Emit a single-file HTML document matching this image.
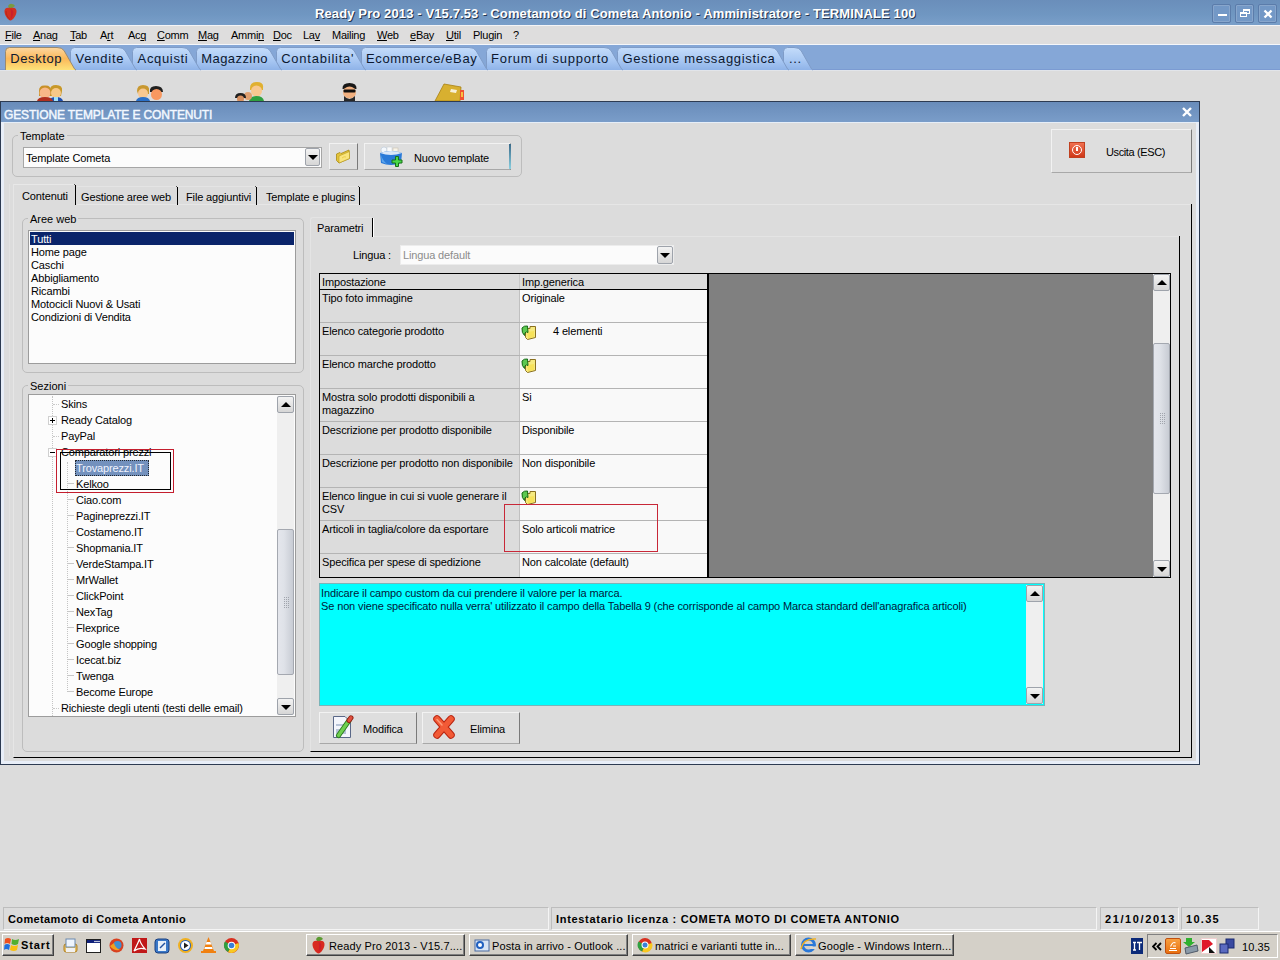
<!DOCTYPE html>
<html><head><meta charset="utf-8">
<style>
*{margin:0;padding:0;box-sizing:border-box}
html,body{width:1280px;height:960px;overflow:hidden;background:#dcdcdc;font-family:"Liberation Sans",sans-serif;font-size:11px;color:#000;position:relative}
.a{position:absolute;white-space:nowrap}
.t11{font-size:11px;letter-spacing:-0.14px;line-height:13px}
#title{left:0;top:0;width:1280px;height:25px;background:linear-gradient(#6a8eba,#7097c2 60%,#7a9fc9)}
#title .t{left:315px;top:5.5px;font-weight:bold;font-size:13px;letter-spacing:0.12px;color:#fff;text-shadow:1px 1px 0 #263650}
.wb{top:4px;width:19px;height:19px;border:1px solid #5b7caa;box-shadow:inset 0 0 0 1px #88a6cc;background:#7398c6;border-radius:2px}
#menu{left:0;top:25px;width:1280px;height:19px;background:#dedddd;border-top:1px solid #f4f4f6}
#menu span{position:absolute;top:3.5px;font-size:11px;letter-spacing:-0.25px;line-height:11px}
#menu u{text-decoration:underline;text-underline-offset:1px}
#tabs{left:0;top:44px;width:1280px;height:26px;background:#85a7d7;border-top:1px solid #f4f6fa}
#tabs:after{content:"";position:absolute;left:0;top:24px;width:1280px;height:1px;background:#7b9bd2}
#tabs:before{content:"";position:absolute;left:0;top:25px;width:1280px;height:1px;background:#e2e5ea}
.tab{position:absolute;top:2px;height:23px}
.tab svg{position:absolute;left:0;top:0}
.tab span{position:absolute;left:6px;top:5px;font-size:13px;letter-spacing:0.55px;color:#0c1830;line-height:13px}
#dlg{left:0;top:101px;width:1200px;height:664px;background:#dcdcdc;border:1px solid #2d3b52}
#dlgt{left:0;top:0;width:1198px;height:21px;background:linear-gradient(#698cba,#7a9dc9);border-bottom:1px solid #e6eef8}
#dlgt .t{left:3px;top:7px;color:#f2f8ff;font-weight:normal;-webkit-text-stroke:0.45px #f2f8ff;font-size:12px;letter-spacing:-0.14px;line-height:12px}
.lb{background:#e8eef8}
.gb{border:1px solid #bdbdbd;border-radius:5px}
.gl{background:#dcdcdc;padding:0 2px;line-height:13px}
.white{background:#fcfcfc;border:1px solid #9c9c9c}
.btn{background:#dedede;border:1px solid;border-color:#f2f2f2 #7a7a7a #a8a8a8 #f2f2f2}
.sb{background:#efefef}
.sbb{width:17px;height:17px;border:1px solid #9ea3ab;border-radius:2px;background:linear-gradient(#f3f3f3,#d6d6d6)}
.up{width:0;height:0;border-left:5px solid transparent;border-right:5px solid transparent;border-bottom:5px solid #000;position:absolute;left:3px;top:5px}
.dn{width:0;height:0;border-left:5px solid transparent;border-right:5px solid transparent;border-top:5px solid #000;position:absolute;left:3px;top:5px}
.row{left:0;width:386px;height:33px;border-bottom:1px solid #b4b4b4}
.c1{left:0;width:198px;height:32px;background:#dcdcdc;padding:2px 0 0 3px;white-space:normal;line-height:13px}
.c2{left:199px;width:187px;height:32px;background:#f9f9f9;border-left:1px solid #b8b8b8;padding:2px 0 0 3px}
.ico{width:16px;height:16px}
#status{left:0;top:907px;width:1280px;height:24px}
.sp{top:0;height:23px;border:1px solid;border-color:#bdbdbd #f4f4f4 #f4f4f4 #bdbdbd;font-weight:bold;padding:5.5px 0 0 4px;line-height:11px}
#task{left:0;top:931px;width:1280px;height:29px;background:#d4d0c8;border-top:1px solid #fff}
.tb{top:2px;height:22px;border:1px solid;border-color:#fff #404040 #404040 #fff;box-shadow:inset -1px -1px 0 #808080;background:#d4d0c8;padding:5px 0 0 23px;font-size:11px;line-height:12px}
.thumb{background:linear-gradient(90deg,#e4e6ec,#dfe2e8 40%,#c8ccd4);border:1px solid #a4a8b0;border-radius:2px}

.tbtn{top:2px;width:159px;height:22px;border:1px solid;border-color:#fff #404040 #404040 #fff;box-shadow:inset -1px -1px 0 #808080;background:#d4d0c8}
.tbtn span{position:absolute;left:22px;top:5px;font-size:11px;line-height:12px;letter-spacing:0.12px}
</style></head><body>
<!-- TITLE BAR -->
<div id="title" class="a">
 
 <div class="t a">Ready Pro 2013 - V15.7.53 - Cometamoto di Cometa Antonio - Amministratore - TERMINALE 100</div>
 <div class="wb a" style="left:1212px"><div class="a" style="left:5px;top:9px;width:9px;height:2px;background:#fff"></div></div>
 <div class="wb a" style="left:1235px"><div class="a" style="left:7px;top:4px;width:7px;height:5px;border:1px solid #fff;border-top-width:2px"></div><div class="a" style="left:4px;top:7px;width:7px;height:5px;border:1px solid #fff;border-top-width:2px;background:#7396c4"></div></div>
 <div class="wb a" style="left:1258px"><svg class="a" style="left:4px;top:4px" width="10" height="10"><path d="M1.5 1.5L8.5 8.5M8.5 1.5L1.5 8.5" stroke="#fff" stroke-width="2.3"/></svg></div>
</div>
<!-- MENU -->
<div id="menu" class="a">
<span style="left:5px"><u>F</u>ile</span><span style="left:33px"><u>A</u>nag</span><span style="left:70px"><u>T</u>ab</span><span style="left:100px">A<u>r</u>t</span><span style="left:128px">Ac<u>q</u></span><span style="left:157px"><u>C</u>omm</span><span style="left:198px"><u>M</u>ag</span><span style="left:231px">Ammi<u>n</u></span><span style="left:273px"><u>D</u>oc</span><span style="left:303px">La<u>v</u></span><span style="left:332px">Mailin<u>g</u></span><span style="left:377px"><u>W</u>eb</span><span style="left:410px"><u>e</u>Bay</span><span style="left:446px"><u>U</u>til</span><span style="left:473px">Plugin</span><span style="left:513px">?</span>
</div>
<!-- TABS -->
<div id="tabs" class="a">
 <svg width="0" height="0" style="position:absolute"><defs><linearGradient id="go" x1="0" y1="0" x2="0" y2="1"><stop offset="0" stop-color="#fdd7a0"/><stop offset="0.5" stop-color="#fbb85a"/><stop offset="1" stop-color="#fde27a"/></linearGradient><linearGradient id="gb" x1="0" y1="0" x2="0" y2="1"><stop offset="0" stop-color="#c4dcfa"/><stop offset="0.6" stop-color="#a6c6f2"/><stop offset="1" stop-color="#8fb3e8"/></linearGradient></defs></svg><div class="tab" style="left:5px;width:71px;z-index:9"><svg width="71" height="24"><path d="M0.5,23 L0.5,4.5 Q0.5,0.5 4.5,0.5 L52,0.5 Q57,0.5 59,3.5 L69,21 Q70,23 71,23 Z" fill="url(#go)"/><path d="M0.5,23 L0.5,4.5 Q0.5,0.5 4.5,0.5 L52,0.5 Q57,0.5 59,3.5 L69,21 Q70,23 71,23" fill="none" stroke="#9a8a70"/></svg><span style="left:5.3px;letter-spacing:0.59px">Desktop</span></div>
<div class="tab" style="left:70px;width:67px;z-index:8"><svg width="67" height="24"><path d="M0.5,23 L0.5,4.5 Q0.5,0.5 4.5,0.5 L48,0.5 Q53,0.5 55,3.5 L65,21 Q66,23 67,23 Z" fill="url(#gb)"/><path d="M0.5,23 L0.5,4.5 Q0.5,0.5 4.5,0.5 L48,0.5 Q53,0.5 55,3.5 L65,21 Q66,23 67,23" fill="none" stroke="#7f9cc8"/></svg><span style="left:5.6px;letter-spacing:0.75px">Vendite</span></div>
<div class="tab" style="left:132px;width:69px;z-index:7"><svg width="69" height="24"><path d="M0.5,23 L0.5,4.5 Q0.5,0.5 4.5,0.5 L50,0.5 Q55,0.5 57,3.5 L67,21 Q68,23 69,23 Z" fill="url(#gb)"/><path d="M0.5,23 L0.5,4.5 Q0.5,0.5 4.5,0.5 L50,0.5 Q55,0.5 57,3.5 L67,21 Q68,23 69,23" fill="none" stroke="#7f9cc8"/></svg><span style="left:5.6px;letter-spacing:0.66px">Acquisti</span></div>
<div class="tab" style="left:196px;width:86px;z-index:6"><svg width="86" height="24"><path d="M0.5,23 L0.5,4.5 Q0.5,0.5 4.5,0.5 L67,0.5 Q72,0.5 74,3.5 L84,21 Q85,23 86,23 Z" fill="url(#gb)"/><path d="M0.5,23 L0.5,4.5 Q0.5,0.5 4.5,0.5 L67,0.5 Q72,0.5 74,3.5 L84,21 Q85,23 86,23" fill="none" stroke="#7f9cc8"/></svg><span style="left:5.3px;letter-spacing:0.42px">Magazzino</span></div>
<div class="tab" style="left:276px;width:90px;z-index:5"><svg width="90" height="24"><path d="M0.5,23 L0.5,4.5 Q0.5,0.5 4.5,0.5 L71,0.5 Q76,0.5 78,3.5 L88,21 Q89,23 90,23 Z" fill="url(#gb)"/><path d="M0.5,23 L0.5,4.5 Q0.5,0.5 4.5,0.5 L71,0.5 Q76,0.5 78,3.5 L88,21 Q89,23 90,23" fill="none" stroke="#7f9cc8"/></svg><span style="left:5.2px;letter-spacing:0.77px">Contabilita'</span></div>
<div class="tab" style="left:361px;width:127px;z-index:4"><svg width="127" height="24"><path d="M0.5,23 L0.5,4.5 Q0.5,0.5 4.5,0.5 L108,0.5 Q113,0.5 115,3.5 L125,21 Q126,23 127,23 Z" fill="url(#gb)"/><path d="M0.5,23 L0.5,4.5 Q0.5,0.5 4.5,0.5 L108,0.5 Q113,0.5 115,3.5 L125,21 Q126,23 127,23" fill="none" stroke="#7f9cc8"/></svg><span style="left:5.0px;letter-spacing:0.63px">Ecommerce/eBay</span></div>
<div class="tab" style="left:486px;width:137px;z-index:3"><svg width="137" height="24"><path d="M0.5,23 L0.5,4.5 Q0.5,0.5 4.5,0.5 L118,0.5 Q123,0.5 125,3.5 L135,21 Q136,23 137,23 Z" fill="url(#gb)"/><path d="M0.5,23 L0.5,4.5 Q0.5,0.5 4.5,0.5 L118,0.5 Q123,0.5 125,3.5 L135,21 Q136,23 137,23" fill="none" stroke="#7f9cc8"/></svg><span style="left:5.0px;letter-spacing:0.74px">Forum di supporto</span></div>
<div class="tab" style="left:617px;width:172px;z-index:2"><svg width="172" height="24"><path d="M0.5,23 L0.5,4.5 Q0.5,0.5 4.5,0.5 L153,0.5 Q158,0.5 160,3.5 L170,21 Q171,23 172,23 Z" fill="url(#gb)"/><path d="M0.5,23 L0.5,4.5 Q0.5,0.5 4.5,0.5 L153,0.5 Q158,0.5 160,3.5 L170,21 Q171,23 172,23" fill="none" stroke="#7f9cc8"/></svg><span style="left:5.5px;letter-spacing:0.68px">Gestione messaggistica</span></div>
<div class="tab" style="left:783px;width:30px;z-index:1"><svg width="30" height="24"><path d="M0.5,23 L0.5,4.5 Q0.5,0.5 4.5,0.5 L11,0.5 Q16,0.5 18,3.5 L28,21 Q29,23 30,23 Z" fill="url(#gb)"/><path d="M0.5,23 L0.5,4.5 Q0.5,0.5 4.5,0.5 L11,0.5 Q16,0.5 18,3.5 L28,21 Q29,23 30,23" fill="none" stroke="#7f9cc8"/></svg><span style="left:6.0px;letter-spacing:0.62px">...</span></div>

</div>
<!-- DESKTOP ICONS -->
<svg class="a" style="left:36px;top:84px" width="30" height="17" viewBox="0 0 30 17"><path d="M14 6 Q14 1 20 1 Q27 1 26 7 L25 12 L15 12Z" fill="#c89828"/><circle cx="20" cy="9" r="5" fill="#f8c888"/><path d="M13 17 Q14 13 20 13 Q26 13 27 17Z" fill="#2050b0"/><rect x="18" y="13" width="4" height="4" fill="#a0e0f8"/><path d="M3 7 Q3 1 9 1.5 Q15 1 15 7 L15 12 L3 12Z" fill="#c89028"/><circle cx="9" cy="9" r="5.5" fill="#f8b888"/><path d="M1 17 Q2 13 9 13 Q16 13 17 17Z" fill="#b03020"/></svg>
<svg class="a" style="left:136px;top:84px" width="28" height="17" viewBox="0 0 28 17"><path d="M14 8 Q13 2 20 2 Q27 2 27 8Z" fill="#202020"/><circle cx="20.5" cy="10.5" r="5.5" fill="#f89860"/><path d="M1 7 Q1 1 7 1 Q14 1 13 7 L13 10 L2 10Z" fill="#c89830"/><circle cx="7" cy="9.5" r="5" fill="#f8c890"/><path d="M0 17 Q1 13 7 13 Q13 13 14 17Z" fill="#2a70c8"/></svg>
<svg class="a" style="left:234px;top:82px" width="31" height="19" viewBox="0 0 31 19"><path d="M16 6 Q16 0 23 0 Q30 0 29 6 L29 8 L16 8Z" fill="#e0b030"/><circle cx="22.5" cy="9" r="5.5" fill="#f8c890"/><path d="M15 19 Q16 14 22.5 14 Q29 14 30 19Z" fill="#30a040"/><circle cx="14" cy="14" r="4" fill="#e0a070"/><path d="M1 16 Q1 11 6.5 11 Q12 11 12 16Z" fill="#202020"/><circle cx="6.5" cy="17" r="3.5" fill="#d89060"/></svg>
<svg class="a" style="left:341px;top:82px" width="17" height="19" viewBox="0 0 17 19"><path d="M1.5 7 Q1 1 8.5 1 Q16 1 15.5 7Z" fill="#181818"/><ellipse cx="8.5" cy="10.5" rx="6.5" ry="6" fill="#f0b080"/><rect x="2.5" y="7.5" width="12" height="3" rx="1" fill="#101010"/><path d="M3 14 Q8.5 20 14 14 L14 19 L3 19Z" fill="#282828"/></svg>
<svg class="a" style="left:434px;top:83px" width="32" height="18" viewBox="0 0 32 18"><path d="M10 1 L27 4 L26 18 L1 18Z" fill="#d8b030" stroke="#a88010" stroke-width=".8"/><path d="M17 6 L23 7 L22 10 L16 9Z" fill="#f8f0d8"/><rect x="26" y="7" width="4" height="10" fill="#f05030"/><rect x="27" y="9" width="2" height="5" fill="#f8c040"/></svg>
<svg class="a" style="left:3px;top:3px" width="15" height="18" viewBox="0 0 15 18"><path d="M5 3 Q7 0 9 1 Q11 1 12 3 L9 5 L6 5Z" fill="#7a9a40"/><path d="M7.5 5 C4 4 1 5 1.5 9 C2 13 5 17 7.5 17.5 C10 17 13 13 13.5 9 C14 5 11 4 7.5 5Z" fill="#d23020"/><path d="M7.5 6 C9 6 11 8 10 12 C9 15 8 16 7.5 16 C8 13 8.5 9 7.5 6Z" fill="#c81830" opacity=".7"/><path d="M3 8 C3 12 5 15 7 16.5" stroke="#a02010" stroke-width="1" fill="none" opacity=".5"/></svg>

<!-- DIALOG -->
<div id="dlg" class="a">
 <div id="dlgt" class="a"><div class="t a">GESTIONE TEMPLATE E CONTENUTI</div>
  <svg class="a" style="left:1181px;top:5px" width="10" height="10"><path d="M1 1L9 9M9 1L1 9" stroke="#fff" stroke-width="2.4"/></svg>
 </div>
 <!-- body content placeholder -->
</div>
<!-- dialog light borders -->
<div class="a lb" style="left:1px;top:122px;width:3px;height:641px"></div>
<div class="a lb" style="left:1196px;top:122px;width:3px;height:641px"></div>
<div class="a lb" style="left:1px;top:761px;width:1198px;height:3px"></div>
<!-- Template groupbox -->
<div class="a gb" style="left:12px;top:135px;width:510px;height:42px"></div>
<div class="a gl" style="left:18px;top:130px">Template</div>
<div class="a white" style="left:23px;top:147px;width:299px;height:21px;border-color:#a6a6a6"></div>
<div class="a t11" style="left:26px;top:152px">Template Cometa</div>
<div class="a sbb" style="left:305px;top:148px;width:15px;height:18px"><div class="dn" style="left:2px;top:6px"></div></div>
<div class="a btn" style="left:329px;top:143px;width:29px;height:27px"></div>
<div class="a btn" style="left:364px;top:143px;width:147px;height:27px"></div>
<div class="a" style="left:509px;top:144px;width:2px;height:25px;background:linear-gradient(#3a6a8a,#8ad0e0)"></div>
<div class="a t11" style="left:414px;top:152px">Nuovo template</div>
<!-- Uscita -->
<div class="a btn" style="left:1051px;top:129px;width:141px;height:44px"></div>
<div class="a" style="left:1069px;top:142px;width:16px;height:16px;background:linear-gradient(#f07050,#d03818);border:1px solid #c04020"></div>
<div class="a" style="left:1072px;top:145px;width:10px;height:10px;border:1.5px solid #fff;border-radius:50%"></div>
<div class="a" style="left:1076px;top:147px;width:2px;height:4px;background:#fff"></div>
<div class="a t11" style="left:1106px;top:146px;letter-spacing:-0.38px">Uscita (ESC)</div>
<!-- outer tab control -->
<div class="a" style="left:13px;top:184px;width:62px;height:1px;background:#e8e8e8"></div>
<div class="a" style="left:77px;top:186px;width:283px;height:1px;background:#e4e4e4"></div>
<div class="a" style="left:13px;top:184px;width:1px;height:20px;background:#e6e6e6"></div>
<div class="a" style="left:9px;top:184px;width:1px;height:572px;background:#e2e2e2"></div>
<div class="a" style="left:13px;top:204px;width:1179px;height:554px;border-left:1px solid #e6e6e6;border-right:1px solid #000;border-bottom:1px solid #000"></div><div class="a" style="left:77px;top:204px;width:1114px;height:1px;background:#e6e6e6"></div>
<div class="a" style="left:75px;top:185px;width:1px;height:20px;background:#000"></div><div class="a" style="left:74px;top:184px;width:1px;height:1px;background:#555"></div>
<div class="a" style="left:177px;top:187px;width:1px;height:18px;background:#000"></div><div class="a" style="left:176px;top:186px;width:1px;height:1px;background:#555"></div>
<div class="a" style="left:256px;top:187px;width:1px;height:18px;background:#000"></div><div class="a" style="left:255px;top:186px;width:1px;height:1px;background:#555"></div>
<div class="a" style="left:359px;top:187px;width:1px;height:18px;background:#000"></div><div class="a" style="left:358px;top:186px;width:1px;height:1px;background:#555"></div>
<div class="a t11" style="left:22px;top:190px">Contenuti</div>
<div class="a t11" style="left:81px;top:191px">Gestione aree web</div>
<div class="a t11" style="left:186px;top:191px">File aggiuntivi</div>
<div class="a t11" style="left:266px;top:191px">Template e plugins</div>
<!-- Aree web -->
<div class="a gb" style="left:22px;top:218px;width:282px;height:155px"></div>
<div class="a gl" style="left:28px;top:213px">Aree web</div>
<div class="a white" style="left:28px;top:230px;width:268px;height:134px"></div>
<div class="a" style="left:30px;top:232px;width:264px;height:13px;background:#0a246a"></div>
<div class="a t11" style="left:31px;top:233px;color:#fff">Tutti</div>
<div class="a t11" style="left:31px;top:246px;line-height:13px;white-space:pre">Home page
Caschi
Abbigliamento
Ricambi
Motocicli Nuovi &amp; Usati
Condizioni di Vendita</div>
<!-- Sezioni -->
<div class="a gb" style="left:22px;top:385px;width:282px;height:367px"></div>
<div class="a gl" style="left:28px;top:380px">Sezioni</div>
<div class="a white" style="left:28px;top:394px;width:268px;height:323px"></div>

<!-- tree -->
<div class="a" style="left:52px;top:396px;width:1px;height:320px;border-left:1px dotted #c4c4c4"></div>
<div class="a" style="left:67px;top:462px;width:1px;height:230px;border-left:1px dotted #c4c4c4"></div>
<div class="a" style="left:53px;top:404px;width:6px;height:1px;border-top:1px dotted #c8c8c8"></div>
<div class="a" style="left:53px;top:436px;width:6px;height:1px;border-top:1px dotted #c8c8c8"></div>
<div class="a" style="left:53px;top:708px;width:6px;height:1px;border-top:1px dotted #c8c8c8"></div>
<div id="tl2" class="a" style="left:68px;top:468px;width:6px;height:224px;background:repeating-linear-gradient(transparent 0,transparent 15px,#c8c8c8 15px,#c8c8c8 16px)"></div>
<div class="a" style="left:48px;top:416px;width:9px;height:9px;border:1px solid #d0d0d0;background:#fff"></div><div class="a" style="left:48px;top:448px;width:9px;height:9px;border:1px solid #d0d0d0;background:#fff"></div><div class="a" style="left:50px;top:420px;width:5px;height:1px;background:#000"></div>
<div class="a" style="left:52px;top:418px;width:1px;height:5px;background:#000"></div>
<div class="a" style="left:50px;top:452px;width:5px;height:1px;background:#000"></div>
<div class="a" style="left:75px;top:460px;width:74px;height:16px;background:#7391bd;border:1px dotted #202830"></div>
<div class="a" style="left:61px;top:396px;line-height:16px;white-space:pre;letter-spacing:-0.14px">Skins
Ready Catalog
PayPal
Comparatori prezzi</div>
<div class="a" style="left:76px;top:460px;line-height:16px;letter-spacing:-0.14px;color:#f0f4ff">Trovaprezzi.IT</div>
<div class="a" style="left:76px;top:476px;line-height:16px;white-space:pre;letter-spacing:-0.14px">Kelkoo
Ciao.com
Pagineprezzi.IT
Costameno.IT
Shopmania.IT
VerdeStampa.IT
MrWallet
ClickPoint
NexTag
Flexprice
Google shopping
Icecat.biz
Twenga
Become Europe</div>
<div class="a" style="left:61px;top:700px;line-height:16px;letter-spacing:-0.14px">Richieste degli utenti (testi delle email)</div>
<div class="a" style="left:56px;top:449px;width:118px;height:44px;border:1px solid #c41e2e"></div>
<div class="a" style="left:60px;top:452px;width:111px;height:38px;border:1px solid #000"></div>
<!-- tree scrollbar -->
<div class="a sb" style="left:277px;top:396px;width:17px;height:319px"></div>
<div class="a sbb" style="left:277px;top:396px"><div class="up"></div></div>
<div class="a sbb" style="left:277px;top:698px"><div class="dn" style="top:6px"></div></div>
<div class="a thumb" style="left:277px;top:529px;width:17px;height:146px"></div><svg class="a" style="left:283px;top:596px" width="7" height="13"><rect x="1" y="1" width="1" height="1" fill="#a0a4ac"/><rect x="1" y="3" width="1" height="1" fill="#a0a4ac"/><rect x="1" y="5" width="1" height="1" fill="#a0a4ac"/><rect x="1" y="7" width="1" height="1" fill="#a0a4ac"/><rect x="1" y="9" width="1" height="1" fill="#a0a4ac"/><rect x="1" y="11" width="1" height="1" fill="#a0a4ac"/><rect x="3" y="1" width="1" height="1" fill="#a0a4ac"/><rect x="3" y="3" width="1" height="1" fill="#a0a4ac"/><rect x="3" y="5" width="1" height="1" fill="#a0a4ac"/><rect x="3" y="7" width="1" height="1" fill="#a0a4ac"/><rect x="3" y="9" width="1" height="1" fill="#a0a4ac"/><rect x="3" y="11" width="1" height="1" fill="#a0a4ac"/><rect x="5" y="1" width="1" height="1" fill="#a0a4ac"/><rect x="5" y="3" width="1" height="1" fill="#a0a4ac"/><rect x="5" y="5" width="1" height="1" fill="#a0a4ac"/><rect x="5" y="7" width="1" height="1" fill="#a0a4ac"/><rect x="5" y="9" width="1" height="1" fill="#a0a4ac"/><rect x="5" y="11" width="1" height="1" fill="#a0a4ac"/></svg>
<!-- inner tab control -->
<div class="a" style="left:310px;top:236px;width:870px;height:516px;border-left:1px solid #e4e4e4;border-right:1px solid #000;border-bottom:1px solid #000"></div><div class="a" style="left:374px;top:236px;width:805px;height:1px;background:#e4e4e4"></div>
<div class="a" style="left:310px;top:217px;width:62px;height:20px;border-top:1px solid #e4e4e4;border-left:1px solid #e4e4e4;border-radius:3px 0 0 0"></div>
<div class="a" style="left:372px;top:218px;width:2px;height:19px;border-left:1px solid #000;border-right:1px solid #fff"></div>
<div class="a t11" style="left:317px;top:222px">Parametri</div>
<div class="a t11" style="left:353px;top:249px">Lingua :</div>
<div class="a white" style="left:400px;top:245px;width:274px;height:20px;border-color:#ececec;background:#fbfbfb"></div>
<div class="a t11" style="left:403px;top:249px;color:#8c8c8c">Lingua default</div>
<div class="a sbb" style="left:657px;top:246px;width:16px;height:18px"><div class="dn" style="left:2px;top:6px"></div></div>
<!-- grid -->
<div class="a" style="left:319px;top:273px;width:852px;height:305px;background:#808080;border:1px solid #000"></div>
<div id="grid" class="a" style="left:320px;top:274px;width:387px;height:303px;background:#f9f9f9;overflow:hidden">
 <div class="a" style="left:0;top:0;width:387px;height:15px;background:#dcdcdc"></div>
 <div class="a" style="left:0;top:15px;width:387px;height:1px;background:#000"></div>
 <div class="a t11" style="left:2px;top:2px">Impostazione</div>
 <div class="a" style="left:199px;top:0;width:1px;height:15px;background:#c8c8c8"></div>
 <div class="a t11" style="left:202px;top:2px">Imp.generica</div>
 <div class="a" style="left:0;top:16px;width:199px;height:290px;background:#dcdcdc"></div>
 <div class="a" style="left:199px;top:16px;width:1px;height:290px;background:#c0c0c0"></div>
 <div class="a" style="left:0;top:48px;width:387px;height:1px;background:#b4b4b4"></div>
 <div class="a t11" style="left:2px;top:18px;white-space:normal;width:196px">Tipo foto immagine</div>
 <div class="a t11" style="left:202px;top:18px">Originale</div>
 <div class="a" style="left:0;top:81px;width:387px;height:1px;background:#b4b4b4"></div>
 <div class="a t11" style="left:2px;top:51px;white-space:normal;width:196px">Elenco categorie prodotto</div>
 <svg class="a" style="left:200px;top:50px" width="17" height="17" viewBox="0 0 17 17"><path d="M5.5 4.5 L10 4.5 L10 2.5 L15.5 2.5 L15.5 13.5 L7.5 15.5 L5.5 13.5Z" fill="#f6ea80" stroke="#8a7020" stroke-width="1"/><path d="M7 8 L14 7 L14 13 L8 14.5Z" fill="#f8e050" opacity=".8"/><path d="M2 4 Q4 1.5 7.5 2 L8 8.5 Q6 7 5 9 L4.5 11.5 Q1.5 9 2 4Z" fill="#5cc850" stroke="#146a14" stroke-width="1"/></svg>
 <div class="a t11" style="left:233px;top:51px">4 elementi</div>
 <div class="a" style="left:0;top:114px;width:387px;height:1px;background:#b4b4b4"></div>
 <div class="a t11" style="left:2px;top:84px;white-space:normal;width:196px">Elenco marche prodotto</div>
 <svg class="a" style="left:200px;top:83px" width="17" height="17" viewBox="0 0 17 17"><path d="M5.5 4.5 L10 4.5 L10 2.5 L15.5 2.5 L15.5 13.5 L7.5 15.5 L5.5 13.5Z" fill="#f6ea80" stroke="#8a7020" stroke-width="1"/><path d="M7 8 L14 7 L14 13 L8 14.5Z" fill="#f8e050" opacity=".8"/><path d="M2 4 Q4 1.5 7.5 2 L8 8.5 Q6 7 5 9 L4.5 11.5 Q1.5 9 2 4Z" fill="#5cc850" stroke="#146a14" stroke-width="1"/></svg>
 <div class="a" style="left:0;top:147px;width:387px;height:1px;background:#b4b4b4"></div>
 <div class="a t11" style="left:2px;top:117px;white-space:normal;width:196px">Mostra solo prodotti disponibili a magazzino</div>
 <div class="a t11" style="left:202px;top:117px">Si</div>
 <div class="a" style="left:0;top:180px;width:387px;height:1px;background:#b4b4b4"></div>
 <div class="a t11" style="left:2px;top:150px;white-space:normal;width:196px">Descrizione per prodotto disponibile</div>
 <div class="a t11" style="left:202px;top:150px">Disponibile</div>
 <div class="a" style="left:0;top:213px;width:387px;height:1px;background:#b4b4b4"></div>
 <div class="a t11" style="left:2px;top:183px;white-space:normal;width:196px">Descrizione per prodotto non disponibile</div>
 <div class="a t11" style="left:202px;top:183px">Non disponibile</div>
 <div class="a" style="left:0;top:246px;width:387px;height:1px;background:#b4b4b4"></div>
 <div class="a t11" style="left:2px;top:216px;white-space:normal;width:196px">Elenco lingue in cui si vuole generare il CSV</div>
 <svg class="a" style="left:200px;top:215px" width="17" height="17" viewBox="0 0 17 17"><path d="M5.5 4.5 L10 4.5 L10 2.5 L15.5 2.5 L15.5 13.5 L7.5 15.5 L5.5 13.5Z" fill="#f6ea80" stroke="#8a7020" stroke-width="1"/><path d="M7 8 L14 7 L14 13 L8 14.5Z" fill="#f8e050" opacity=".8"/><path d="M2 4 Q4 1.5 7.5 2 L8 8.5 Q6 7 5 9 L4.5 11.5 Q1.5 9 2 4Z" fill="#5cc850" stroke="#146a14" stroke-width="1"/></svg>
 <div class="a" style="left:0;top:279px;width:387px;height:1px;background:#b4b4b4"></div>
 <div class="a t11" style="left:2px;top:249px;white-space:normal;width:196px">Articoli in taglia/colore da esportare</div>
 <div class="a t11" style="left:202px;top:249px">Solo articoli matrice</div>
 <div class="a" style="left:0;top:312px;width:387px;height:1px;background:#b4b4b4"></div>
 <div class="a t11" style="left:2px;top:282px;white-space:normal;width:196px">Specifica per spese di spedizione</div>
 <div class="a t11" style="left:202px;top:282px">Non calcolate (default)</div>
</div>
<div class="a" style="left:707px;top:274px;width:2px;height:303px;background:#000"></div>
<div class="a sb" style="left:1153px;top:274px;width:17px;height:303px"></div>
<div class="a sbb" style="left:1153px;top:274px"><div class="up"></div></div>
<div class="a sbb" style="left:1153px;top:560px"><div class="dn" style="top:6px"></div></div>
<div class="a thumb" style="left:1153px;top:343px;width:17px;height:151px"></div><svg class="a" style="left:1159px;top:412px" width="7" height="13"><rect x="1" y="1" width="1" height="1" fill="#a0a4ac"/><rect x="1" y="3" width="1" height="1" fill="#a0a4ac"/><rect x="1" y="5" width="1" height="1" fill="#a0a4ac"/><rect x="1" y="7" width="1" height="1" fill="#a0a4ac"/><rect x="1" y="9" width="1" height="1" fill="#a0a4ac"/><rect x="1" y="11" width="1" height="1" fill="#a0a4ac"/><rect x="3" y="1" width="1" height="1" fill="#a0a4ac"/><rect x="3" y="3" width="1" height="1" fill="#a0a4ac"/><rect x="3" y="5" width="1" height="1" fill="#a0a4ac"/><rect x="3" y="7" width="1" height="1" fill="#a0a4ac"/><rect x="3" y="9" width="1" height="1" fill="#a0a4ac"/><rect x="3" y="11" width="1" height="1" fill="#a0a4ac"/><rect x="5" y="1" width="1" height="1" fill="#a0a4ac"/><rect x="5" y="3" width="1" height="1" fill="#a0a4ac"/><rect x="5" y="5" width="1" height="1" fill="#a0a4ac"/><rect x="5" y="7" width="1" height="1" fill="#a0a4ac"/><rect x="5" y="9" width="1" height="1" fill="#a0a4ac"/><rect x="5" y="11" width="1" height="1" fill="#a0a4ac"/></svg>
<div class="a" style="left:504px;top:504px;width:154px;height:48px;border:1px solid #c82838"></div>
<!-- cyan -->
<div class="a" style="left:319px;top:583px;width:726px;height:123px;background:#00ffff;border:1px solid #7ab4b8"></div>
<div class="a t11" style="left:321px;top:587px;color:#00183a;white-space:pre;line-height:13px;letter-spacing:-0.125px">Indicare il campo custom da cui prendere il valore per la marca.
Se non viene specificato nulla verra' utilizzato il campo della Tabella 9 (che corrisponde al campo Marca standard dell'anagrafica articoli)</div>
<div class="a sb" style="left:1026px;top:585px;width:17px;height:119px"></div>
<div class="a sbb" style="left:1026px;top:585px"><div class="up"></div></div>
<div class="a sbb" style="left:1026px;top:687px"><div class="dn" style="top:6px"></div></div>
<!-- buttons -->
<div class="a btn" style="left:319px;top:712px;width:98px;height:32px"></div>
<div class="a btn" style="left:422px;top:712px;width:98px;height:32px"></div>
<div class="a t11" style="left:363px;top:723px">Modifica</div>
<div class="a t11" style="left:470px;top:723px">Elimina</div>

<!-- icons -->
<svg class="a" style="left:335px;top:148px" width="16" height="16" viewBox="0 0 16 16"><path d="M1.5 6 L5 4.5 L6 5.5 L14 2 L14.5 10.5 L4 15 L1.5 12.5Z" fill="#e4c43a" stroke="#a88a18" stroke-width=".8"/><path d="M4 8 L14.5 3.5 L14.5 10.5 L4 15Z" fill="#fae57e" stroke="#b89a20" stroke-width=".6"/><path d="M7 10 Q9 8 11 9" stroke="#e8c840" stroke-width=".8" fill="none"/></svg>
<svg class="a" style="left:378px;top:145px" width="26" height="23" viewBox="0 0 26 23"><ellipse cx="6" cy="5" rx="3" ry="3" fill="#f4f8fc" stroke="#b8c8d8" stroke-width=".6"/><rect x="9" y="2" width="5" height="5" fill="#fafafa" stroke="#c8d0d8" stroke-width=".6"/><rect x="15" y="3" width="5" height="5" fill="#f8f4e8" stroke="#c8c0b0" stroke-width=".6"/><path d="M2 8 Q13 4 24 8 L23 18 Q13 22 3 18Z" fill="#2a7ad8"/><path d="M2 8 Q13 12 24 8 Q13 4 2 8Z" fill="#dce8f8"/><path d="M3 10 Q5 16 9 19 L4 17Z" fill="#70b8f8" opacity=".7"/><path d="M17.5 11.5 h3 v3.5 h3.5 v3 h-3.5 v3.5 h-3 v-3.5 h-3.5 v-3 h3.5Z" fill="#48d848" stroke="#187018" stroke-width="1"/></svg>
<svg class="a" style="left:332px;top:715px" width="22" height="24" viewBox="0 0 22 24"><path d="M1.5 1.5 L13 1.5 L18.5 7 L18.5 22.5 L1.5 22.5Z" fill="#f4f6fc" stroke="#5a6888" stroke-width="1"/><rect x="4" y="9" width="10" height="2" fill="#b8c4d8"/><rect x="4" y="14" width="10" height="5" fill="#b8c4d8"/><path d="M6.5 20.5 L17 5.5" stroke="#2a7a20" stroke-width="5" stroke-linecap="round"/><path d="M6.5 20.5 L17 5.5" stroke="#70d050" stroke-width="3.2" stroke-linecap="round"/><path d="M17 5.5 L19 2.8" stroke="#902010" stroke-width="5" stroke-linecap="round"/><path d="M17 5.5 L19 2.8" stroke="#e05040" stroke-width="3.2" stroke-linecap="round"/></svg>
<svg class="a" style="left:432px;top:715px" width="24" height="24" viewBox="0 0 24 24"><path d="M5 4 L19 20 M19 4 L5 20" stroke="#b82410" stroke-width="7.5" stroke-linecap="round"/><path d="M5 4 L19 20 M19 4 L5 20" stroke="#f25a36" stroke-width="5.5" stroke-linecap="round"/><path d="M5 4.5 L10 10" stroke="#ff9a78" stroke-width="1.5" stroke-linecap="round"/></svg>

<!-- STATUS -->
<div id="status" class="a">
 <div class="sp a" style="left:3px;width:546px;letter-spacing:0.37px">Cometamoto di Cometa Antonio</div>
 <div class="sp a" style="left:551px;width:546px;letter-spacing:0.69px">Intestatario licenza : COMETA MOTO DI COMETA ANTONIO</div>
 <div class="sp a" style="left:1100px;width:79px;letter-spacing:1.6px">21/10/2013</div>
 <div class="sp a" style="left:1181px;width:78px;letter-spacing:1.3px">10.35</div>
</div>
<!-- TASKBAR -->
<div id="task" class="a">
<div class="a" style="left:2px;top:2px;width:52px;height:22px;border:1px solid;border-color:#fff #404040 #404040 #fff;box-shadow:inset -1px -1px 0 #808080;background:#d4d0c8"></div>
<svg class="a" style="left:4px;top:5px" width="16" height="15" viewBox="0 0 16 15"><path d="M1 2 Q4 0 7 2 L6 7 Q3 5 0.5 7Z" fill="#f05020"/><path d="M8 2 Q11 4 15 2 L14 7 Q11 9 7.5 7Z" fill="#50b030"/><path d="M0.5 8 Q3 6 6 8 L5 13 Q2 11 0 13Z" fill="#2070e0"/><path d="M7 8 Q10 10 14 8 L13 13 Q10 15 6 13Z" fill="#f8c010"/></svg>
<div class="a" style="left:21px;top:7px;font-weight:bold;font-size:11px;letter-spacing:0.9px;line-height:12px">Start</div>
<!-- quick launch -->
<svg class="a" style="left:62px;top:6px" width="17" height="17"><rect x="2" y="6" width="13" height="8" rx="2" fill="#e8c060" stroke="#b08020"/><rect x="4" y="1" width="9" height="8" fill="#eef4fc" stroke="#6a8ab0"/><rect x="4" y="10" width="9" height="4" fill="#f0f0f0"/></svg>
<svg class="a" style="left:85px;top:6px" width="17" height="17"><rect x="1.5" y="1.5" width="14" height="13" fill="#fff" stroke="#202020"/><rect x="2" y="2" width="13" height="3" fill="#10207a"/><circle cx="10" cy="3.5" r=".8" fill="#fff"/><circle cx="12" cy="3.5" r=".8" fill="#fff"/><circle cx="14" cy="3.5" r=".8" fill="#fff"/></svg>
<svg class="a" style="left:108px;top:5px" width="17" height="17"><circle cx="8.5" cy="8.5" r="7" fill="#d84020"/><circle cx="9.5" cy="8" r="4" fill="#4090d0"/><path d="M2 9 Q5 14 12 13 Q7 11 6 6Z" fill="#f0a020"/></svg>
<svg class="a" style="left:131px;top:5px" width="17" height="17"><rect x="1" y="1" width="15" height="15" fill="#c01818"/><path d="M3 14 Q8 4 8.5 2 Q9 6 14 12 Q8 10 3 14Z" fill="none" stroke="#fff" stroke-width="1.2"/></svg>
<svg class="a" style="left:154px;top:5px" width="17" height="17"><rect x="1" y="2" width="14" height="14" rx="3" fill="#3a78c8" stroke="#1a4080"/><rect x="4" y="4" width="8" height="10" fill="#e8f0f8"/><path d="M6 11 L11 6" stroke="#2050a0" stroke-width="1.5"/></svg>
<svg class="a" style="left:177px;top:5px" width="17" height="17"><circle cx="8.5" cy="8.5" r="7.5" fill="#f0b020"/><circle cx="8.5" cy="8.5" r="5.5" fill="#2060c0"/><circle cx="8.5" cy="8.5" r="4.5" fill="#fff"/><path d="M7 5.5 L11.5 8.5 L7 11.5Z" fill="#202020"/></svg>
<svg class="a" style="left:200px;top:4px" width="17" height="18"><path d="M8.5 1 L14 15 L3 15Z" fill="#f08010"/><path d="M6.5 6 L10.5 6 L11.3 8.5 L5.7 8.5Z" fill="#fff"/><path d="M5 11 L12 11 L12.7 13 L4.3 13Z" fill="#fff"/><rect x="1" y="15" width="15" height="2" fill="#f08010"/></svg>
<svg class="a" style="left:223px;top:5px" width="17" height="17"><circle cx="8.5" cy="8.5" r="7.5" fill="#d83020"/><path d="M8.5 8.5 L15.5 6 A7.5 7.5 0 0 1 5 15 Z" fill="#f8c820"/><path d="M8.5 8.5 L5 15 A7.5 7.5 0 0 1 2 4.5Z" fill="#30a040"/><circle cx="8.5" cy="8.5" r="3.8" fill="#fff"/><circle cx="8.5" cy="8.5" r="2.8" fill="#3a80d8"/></svg>
<!-- task buttons -->
<div class="a tbtn" style="left:306px"><span>Ready Pro 2013 - V15.7....</span></div>
<div class="a tbtn" style="left:469px"><span>Posta in arrivo - Outlook ...</span></div>
<div class="a tbtn" style="left:632px"><span>matrici e varianti tutte in...</span></div>
<div class="a tbtn" style="left:795px"><span>Google - Windows Intern...</span></div>
<svg class="a" style="left:311px;top:4px" width="15" height="18" viewBox="0 0 15 18"><path d="M5 3 Q7 0 9 1 Q11 1 12 3 L9 5 L6 5Z" fill="#5a9a30"/><path d="M7.5 5 C4 4 1 5 1.5 9 C2 13 5 17 7.5 17.5 C10 17 13 13 13.5 9 C14 5 11 4 7.5 5Z" fill="#d82a20"/><path d="M7.5 6 C9 6 11 8 10 12 C9 15 8 16 7.5 16 C8 13 8.5 9 7.5 6Z" fill="#c81830" opacity=".7"/></svg>
<svg class="a" style="left:474px;top:5px" width="16" height="16"><rect x="1" y="3" width="14" height="11" fill="#d8e4f4" stroke="#4a6aa0"/><circle cx="6" cy="8" r="4" fill="#2060c0"/><circle cx="6" cy="8" r="2" fill="#fff"/></svg>
<svg class="a" style="left:637px;top:5px" width="16" height="16"><circle cx="8" cy="8" r="7" fill="#d83020"/><path d="M8 8 L15 6 A7 7 0 0 1 5 14.5 Z" fill="#f8c820"/><path d="M8 8 L5 14.5 A7 7 0 0 1 1.5 4.5Z" fill="#30a040"/><circle cx="8" cy="8" r="3.5" fill="#fff"/><circle cx="8" cy="8" r="2.5" fill="#3a80d8"/></svg>
<svg class="a" style="left:800px;top:4px" width="17" height="17"><circle cx="8.5" cy="9" r="6" fill="none" stroke="#2a78d8" stroke-width="3"/><rect x="4" y="8" width="9" height="2" fill="#2a78d8"/><rect x="10" y="10.5" width="6" height="2.5" fill="#dcd8d0"/><path d="M1 13 Q3 2 16 3" fill="none" stroke="#f0b020" stroke-width="1.5"/></svg>
<!-- tray -->
<div class="a" style="left:1131px;top:6px;width:12px;height:16px;background:#0c2a78"></div><svg class="a" style="left:1131px;top:6px" width="12" height="16"><path d="M2 4.5 H5 M3.5 4.5 V12 M2 12 H5 M6 4.5 H11 M8.5 4.5 V12" stroke="#fff" stroke-width="1.3" fill="none"/></svg>
<div class="a" style="left:1147px;top:2px;width:131px;height:24px;border:1px solid;border-color:#808080 #fff #fff #808080"></div>
<svg class="a" style="left:1152px;top:10px" width="10" height="9"><path d="M4.5 1 L1 4.5 L4.5 8 M9 1 L5.5 4.5 L9 8" stroke="#000" stroke-width="1.8" fill="none"/></svg>
<div class="a" style="left:1165px;top:6px;width:16px;height:16px;background:linear-gradient(#f8a040,#e87010);border:1px solid #c05010;border-radius:2px"></div><svg class="a" style="left:1167px;top:8px" width="12" height="12"><path d="M2 10.5 H10 M3 8.5 H9 M3.5 6.5 Q6 1 8.5 3 M6 6 L9 6" stroke="#fff" stroke-width="1.1" fill="none"/></svg>
<svg class="a" style="left:1183px;top:5px" width="16" height="18"><path d="M3 1 L9 1 L9 5 L12 5 L6 10 L0 5 L3 5Z" fill="#30b030"/><path d="M2 11 L14 8 L15 14 L3 17Z" fill="#8a9aa8" stroke="#505a68"/></svg>
<svg class="a" style="left:1201px;top:6px" width="16" height="16"><rect x="0.5" y="0.5" width="15" height="15" fill="#fff" stroke="#f0d0d0"/><path d="M1 2 L8 2 L12 6 L1 14Z" fill="#e01828"/><path d="M8 9 L14 15 L8 15Z" fill="#101010"/></svg>
<svg class="a" style="left:1219px;top:6px" width="16" height="16"><rect x="7" y="1" width="8" height="9" fill="#3a4aa0" stroke="#1a2a70"/><rect x="1" y="6" width="8" height="9" fill="#5a6ac0" stroke="#1a2a70"/></svg>
<div class="a" style="left:1242px;top:9px;font-size:11px;line-height:12px;letter-spacing:0.1px">10.35</div>
</div>
</body></html>
